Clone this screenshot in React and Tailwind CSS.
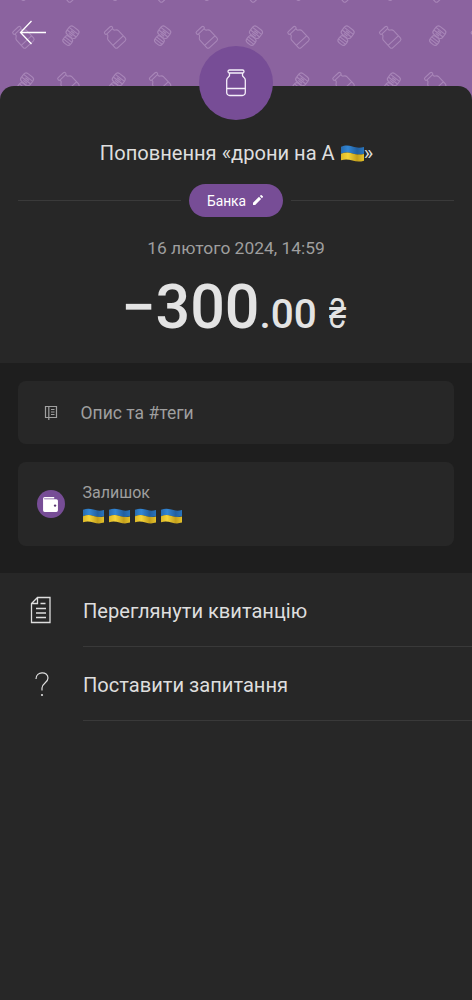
import React from 'react';

const COLS = [0, 1, 2, 3, 4, 5];

function MiniJar({ x, y }) {
  return (
    <g transform={`translate(${x} ${y}) rotate(-43)`}>
      <rect x="-5" y="-12" width="10" height="3" rx="1.400" />
      <path d="M-4 -9v1.500c0 1.500-3 1.500-3 4V6.500a2 2 0 0 0 2 2H5a2 2 0 0 0 2-2V-3.500c0-2.500-3-2.500-3-4V-9M-7 3.500H7" />
    </g>
  );
}

function MiniCoins({ x, y }) {
  return (
    <g transform={`translate(${x} ${y}) rotate(38)`}>
      <rect x="-6" y="-9.500" width="11.500" height="10" rx="3" />
      <path d="M-6 -6.300h11.500M-6 -3h11.500M-2.500 -4.700h4.500M-2.500 -1.300h4.500" />
      <rect x="-3.500" y="1" width="9" height="8" rx="3" />
      <path d="M-3.500 3.800h9M-3.500 6.300h9" />
    </g>
  );
}

function Flag({ className }) {
  return (
    <svg viewBox="0 0 22 16" className={className} role="img" aria-label="🇺🇦">
      <defs>
        <linearGradient id="blue" x1="0" x2="1" y1="0" y2="0">
          <stop offset="0" stopColor="#286cb0" />
          <stop offset=".3" stopColor="#3286d4" />
          <stop offset=".7" stopColor="#225f9f" />
          <stop offset="1" stopColor="#2874bd" />
        </linearGradient>
        <linearGradient id="yellow" x1="0" x2="1" y1="0" y2="0">
          <stop offset="0" stopColor="#dcb727" />
          <stop offset=".3" stopColor="#f5d438" />
          <stop offset=".7" stopColor="#c39f1c" />
          <stop offset="1" stopColor="#e5c22b" />
        </linearGradient>
      </defs>
      <path d="M0 1.500C4-.2 7 0 11 1.300s7 1.400 11 .5v6.500c-4 1.300-7 1-11-.3s-7-1.400-11 .3z" fill="url(#blue)" />
      <path d="M0 8.200C4 6.700 7 6.700 11 7.900s7 1.500 11 .5v6.500c-4 1.200-7 1.100-11-.1s-7-1.500-11-.3z" fill="url(#yellow)" />
    </svg>
  );
}

function Header() {
  return (
    <header className="relative h-[86px] bg-[#8b639f]">
      <svg width="472" height="98" className="absolute left-0 top-0" fill="none" stroke="#a886b8" strokeWidth="1.100">
        {COLS.map((i) => (
          <React.Fragment key={i}>
            <MiniCoins x={25 + i * 91.7} y={-9} />
            <MiniJar x={69 + i * 91.7} y={-8} />
            <MiniJar x={24 + i * 91.7} y={38} />
            <MiniCoins x={70 + i * 91.7} y={36} />
            <MiniCoins x={24.500 + i * 91.7} y={83} />
            <MiniJar x={69 + i * 91.7} y={84} />
          </React.Fragment>
        ))}
      </svg>
      <svg width="28" height="26" viewBox="0 0 28 26" className="absolute left-[19px] top-[20px]" fill="none" stroke="#fff" strokeWidth="1.300">
        <path d="M27 12.500H2M12.500 1 1.500 12.500l11 11.500" />
      </svg>
    </header>
  );
}

function MenuRow({ icon, children }) {
  return (
    <div className="flex h-[74px]">
      <div className="flex w-[83px] items-center justify-center">{icon}</div>
      <div className="flex flex-1 items-center border-b border-[#393939] pt-[3px] text-[20.1px] text-[#dedede]">{children}</div>
    </div>
  );
}

export default function App() {
  return (
    <div className="h-[1000px] w-[472px] overflow-hidden bg-[#272727] font-['Roboto',sans-serif]">
      <Header />
      <div className="relative h-[277px] bg-[#8b639f]">
        <section className="flex h-full flex-col items-center rounded-t-[14px] bg-[#272727]">
          <div className="absolute top-[-40px] flex size-[74px] items-center justify-center rounded-full bg-[#774d96]">
            <svg width="20" height="28" viewBox="0 0 20 28" fill="none" stroke="#f5effa" strokeWidth="1.300">
              <rect x="2" y="1" width="16" height="3" rx="1.500" />
              <path d="M3.500 4v2.500C3.500 8 .7 8 .7 11v12.500a3 3 0 0 0 3 3h12.600a3 3 0 0 0 3-3V11c0-3-2.800-3-2.800-4.500V4M.7 19.500h18.600" />
            </svg>
          </div>
          <h1 className="mt-[52px] flex h-[30px] items-center whitespace-pre pl-px text-[20.1px] text-[#dedede]">
            Поповнення «дрони на А <Flag className="ml-px h-[17px] w-[23px]" />»
          </h1>
          <div className="mt-[16px] flex w-[436px] items-center">
            <div className="h-px flex-1 bg-[#3a3a3a]" />
            <div className="mx-[8px] flex h-[33px] w-[94px] items-center justify-center gap-[7px] rounded-full bg-[#774d96] pt-px pr-[2px] text-[13.8px] text-white">
              Банка
              <svg width="10" height="10" viewBox="0 0 11 11" fill="#fff" className="mb-[2px]">
                <path d="M0 8.500 6.600 2l2.300 2.300L2.400 11H0zM7.500 1.200 8.500.2a.7.7 0 0 1 1 0l1.300 1.300a.7.7 0 0 1 0 1l-1 1z" />
              </svg>
            </div>
            <div className="h-px flex-1 bg-[#3a3a3a]" />
          </div>
          <p className="mt-[18px] h-[26px] text-[17.4px] leading-[26px] text-[#9f9f9f]">16 лютого 2024, 14:59</p>
          <div className="mt-[10px] flex h-[72px] items-baseline whitespace-pre font-medium leading-[72px] text-[#e3e3e3]">
            <span className="text-[61px]">−300</span>
            <span className="text-[40.5px]">.00 </span>
            <span className="ml-[2px] inline-block w-[22px] origin-left scale-x-[.76] text-[40.5px]">₴</span>
          </div>
        </section>
      </div>
      <section className="flex h-[210px] flex-col gap-[18px] bg-[#1e1e1e] px-[18px] pt-[18px]">
        <div className="flex h-[63px] items-center rounded-[8px] bg-[#272727]">
          <div className="w-[62px] pl-[26px]">
            <svg width="14" height="16" viewBox="0 0 14 16" fill="none" stroke="#a0a0a0" strokeWidth="1.200">
              <path d="M1.500 1.500h11v11h-11zM4.800 1.500v13.500M7 4.500h3.500M7 7h3.500M7 9.500h3.500" />
            </svg>
          </div>
          <span className="pt-[2px] pl-[0.5px] text-[17.5px] text-[#9f9f9f]">Опис та #теги</span>
        </div>
        <div className="flex h-[84px] items-center rounded-[8px] bg-[#272727] pl-[18.5px]">
          <div className="flex size-[28px] items-center justify-center rounded-full bg-[#774d96]">
            <svg width="17" height="17" viewBox="0 0 16 16">
              <path d="M2.500 1h9v1.300H2.300c-.5 0-.5.7 0 .7h11.200A1.500 1.500 0 0 1 15 4.500v9a1.500 1.500 0 0 1-1.500 1.500h-11A1.500 1.500 0 0 1 1 13.500v-11A1.500 1.500 0 0 1 2.500 1z" fill="#fff" />
              <circle cx="12.300" cy="9" r="1.100" fill="#583670" />
            </svg>
          </div>
          <div className="ml-[18px] pb-px">
            <div className="text-[16px] leading-[20px] text-[#9f9f9f]">Залишок</div>
            <div className="mt-[5px] flex gap-[5px]">
              <Flag className="h-[16px] w-[21px]" />
              <Flag className="h-[16px] w-[21px]" />
              <Flag className="h-[16px] w-[21px]" />
              <Flag className="h-[16px] w-[21px]" />
            </div>
          </div>
        </div>
      </section>
      <nav>
        <MenuRow
          icon={
            <svg width="22" height="28" viewBox="0 0 22 28" fill="none" stroke="#dedede" strokeWidth="1.300" className="mr-px">
              <path d="M7.500 1.500h12.500v25H1.500V7.500zM7.500 1.500v6h-6M10.500 7.500h5M6 12.500h10M6 17h10M6 21.500h10" />
            </svg>
          }
        >
          Переглянути квитанцію
        </MenuRow>
        <MenuRow
          icon={
            <svg width="14" height="25" viewBox="0 0 14 25" fill="none" stroke="#dedede" strokeWidth="1.200">
              <path d="M1 7c0-8 12-8 12-1 0 5-6 5-6 10v2.500" />
              <circle cx="7" cy="23" r="1.100" fill="#dedede" stroke="none" />
            </svg>
          }
        >
          Поставити запитання
        </MenuRow>
      </nav>
    </div>
  );
}
